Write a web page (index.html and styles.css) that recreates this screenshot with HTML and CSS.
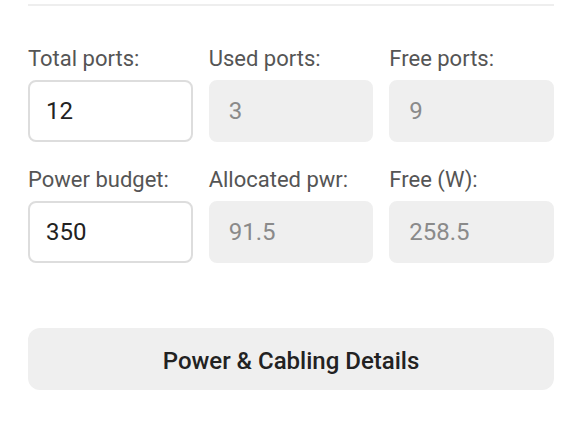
FILE: index.html
```html
<!DOCTYPE html>
<html lang="en">
<head>
<meta charset="utf-8">
<link rel="stylesheet" href="styles.css">
</head>
<body>
<div class="panel">
  <div class="divider"></div>
  <div class="grid">
    <div class="field">
      <label class="label">Total ports:</label>
      <input class="input" type="text" value="12">
    </div>
    <div class="field">
      <label class="label">Used ports:</label>
      <input class="input readonly" type="text" value="3" readonly>
    </div>
    <div class="field">
      <label class="label">Free ports:</label>
      <input class="input readonly" type="text" value="9" readonly>
    </div>
    <div class="field">
      <label class="label">Power budget:</label>
      <input class="input" type="text" value="350">
    </div>
    <div class="field">
      <label class="label">Allocated pwr:</label>
      <input class="input readonly" type="text" value="91.5" readonly>
    </div>
    <div class="field">
      <label class="label">Free (W):</label>
      <input class="input readonly" type="text" value="258.5" readonly>
    </div>
  </div>
  <button class="details-btn" type="button">Power &amp; Cabling Details</button>
</div>
</body>
</html>
```

FILE: styles.css
```css
html, body {
  margin: 0;
  padding: 0;
  background: #ffffff;
  font-family: Roboto, "Liberation Sans", sans-serif;
}

.panel {
  padding: 4px 24px 0 28px;
  display: flex;
  flex-direction: column;
}

.divider {
  height: 2px;
  background: #eeeeee;
}

.grid {
  margin-top: 40px;
  display: grid;
  grid-template-columns: repeat(3, 1fr);
  column-gap: 16px;
  row-gap: 25px;
}

.field {
  display: flex;
  flex-direction: column;
  gap: 8px;
}

.label {
  font-size: 22px;
  line-height: 26px;
  color: #555555;
}

.input {
  box-sizing: border-box;
  width: 100%;
  height: 62px;
  margin: 0;
  padding: 0 16px;
  border: 2px solid #dddddd;
  border-radius: 8px;
  background: #ffffff;
  font-family: Roboto, "Liberation Sans", sans-serif;
  font-size: 24px;
  color: #222222;
  outline: none;
}

.input.readonly {
  padding-left: 18px;
  background: #efefef;
  border-color: #efefef;
  color: #8a8a8a;
}

.details-btn {
  margin-top: 65px;
  height: 62px;
  padding: 4px 0 0;
  border: none;
  border-radius: 12px;
  background: #efefef;
  font-family: Roboto, "Liberation Sans", sans-serif;
  font-size: 24px;
  font-weight: 500;
  color: #222222;
}
```
